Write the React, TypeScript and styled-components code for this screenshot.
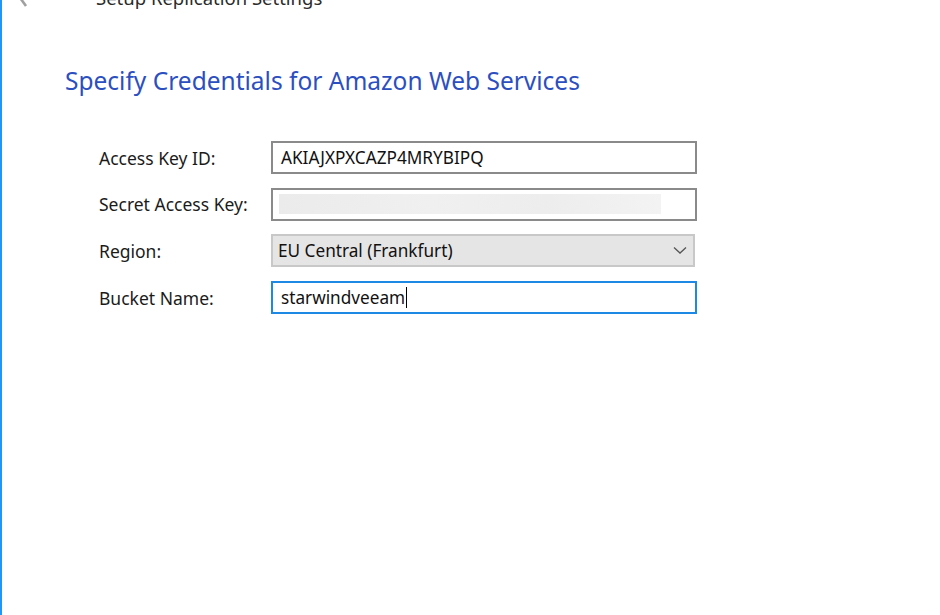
import React from "react";
import styled, { createGlobalStyle } from "styled-components";

const GlobalStyle = createGlobalStyle`
  html, body {
    margin: 0;
    padding: 0;
    background: #ffffff;
    font-family: "Noto Sans", "Open Sans", "DejaVu Sans", sans-serif;
  }
`;

const Window = styled.div`
  width: 940px;
  height: 615px;
  box-sizing: border-box;
  border-left: 2px solid #2196f3;
  background: #ffffff;
  overflow: hidden;
`;

const TitleBar = styled.div`
  display: flex;
  align-items: flex-start;
  height: 10px;
  overflow: hidden;
`;

const BackIcon = styled.svg`
  display: block;
  flex: none;
  margin-left: 14px;
`;

const TitleText = styled.div`
  margin-left: 60px;
  margin-top: -12px;
  font-size: 18.5px;
  line-height: 20px;
  color: #2b2b2b;
  white-space: nowrap;
`;

const Content = styled.div`
  padding: 55px 0 0 63px;
`;

const Heading = styled.h1`
  margin: 0;
  font-weight: 400;
  font-size: 24.5px;
  line-height: 32px;
  color: #2c4fbf;
`;

const Form = styled.div`
  display: grid;
  grid-template-columns: 172px 426px;
  row-gap: 13.7px;
  margin: 44px 0 0 34px;
`;

const Label = styled.div`
  height: 33px;
  display: flex;
  align-items: center;
  font-size: 17.5px;
  color: #1b1b1b;
`;

const Field = styled.div<{ $focused?: boolean; $select?: boolean }>`
  position: relative;
  height: 33px;
  box-sizing: border-box;
  display: flex;
  align-items: center;
  padding: 0 8px;
  font-size: 17.2px;
  color: #111111;
  border: 2px solid
    ${({ $focused, $select }) =>
      $focused ? "#1e88e5" : $select ? "#c8c8c8" : "#8a8a8a"};
  background: ${({ $select }) => ($select ? "#e5e5e5" : "#ffffff")};
  width: ${({ $select }) => ($select ? "424px" : "426px")};
  padding-left: ${({ $select }) => ($select ? "5px" : "8px")};
`;

const Blurred = styled.div`
  flex: 1;
  height: 20px;
  margin-right: 26px;
  margin-left: -2px;
  background: linear-gradient(90deg, #ebebeb 0%, #f0f0f0 40%, #ededed 70%, #f3f3f3 100%);
`;

const Chevron = styled.svg`
  position: absolute;
  right: 6px;
  top: 50%;
  margin-top: -5px;
`;

const Caret = styled.span`
  display: inline-block;
  width: 1px;
  height: 21px;
  background: #000000;
  margin-left: 1px;
`;

export default function App() {
  return (
    <>
      <GlobalStyle />
      <Window>
        <TitleBar>
          <BackIcon width="20" height="10" viewBox="0 0 20 10">
            <path d="M2 -5 L10 6" stroke="#a0a0a0" strokeWidth="2.6" fill="none" />
          </BackIcon>
          <TitleText>Setup Replication Settings</TitleText>
        </TitleBar>
        <Content>
          <Heading>Specify Credentials for Amazon Web Services</Heading>
          <Form>
            <Label>Access Key ID:</Label>
            <Field>AKIAJXPXCAZP4MRYBIPQ</Field>
            <Label>Secret Access Key:</Label>
            <Field>
              <Blurred />
            </Field>
            <Label>Region:</Label>
            <Field $select>
              EU Central (Frankfurt)
              <Chevron width="14" height="9" viewBox="0 0 14 9">
                <path d="M1 1.5 L7 7 L13 1.5" stroke="#555555" strokeWidth="1.3" fill="none" />
              </Chevron>
            </Field>
            <Label>Bucket Name:</Label>
            <Field $focused>
              starwindveeam
              <Caret />
            </Field>
          </Form>
        </Content>
      </Window>
    </>
  );
}
